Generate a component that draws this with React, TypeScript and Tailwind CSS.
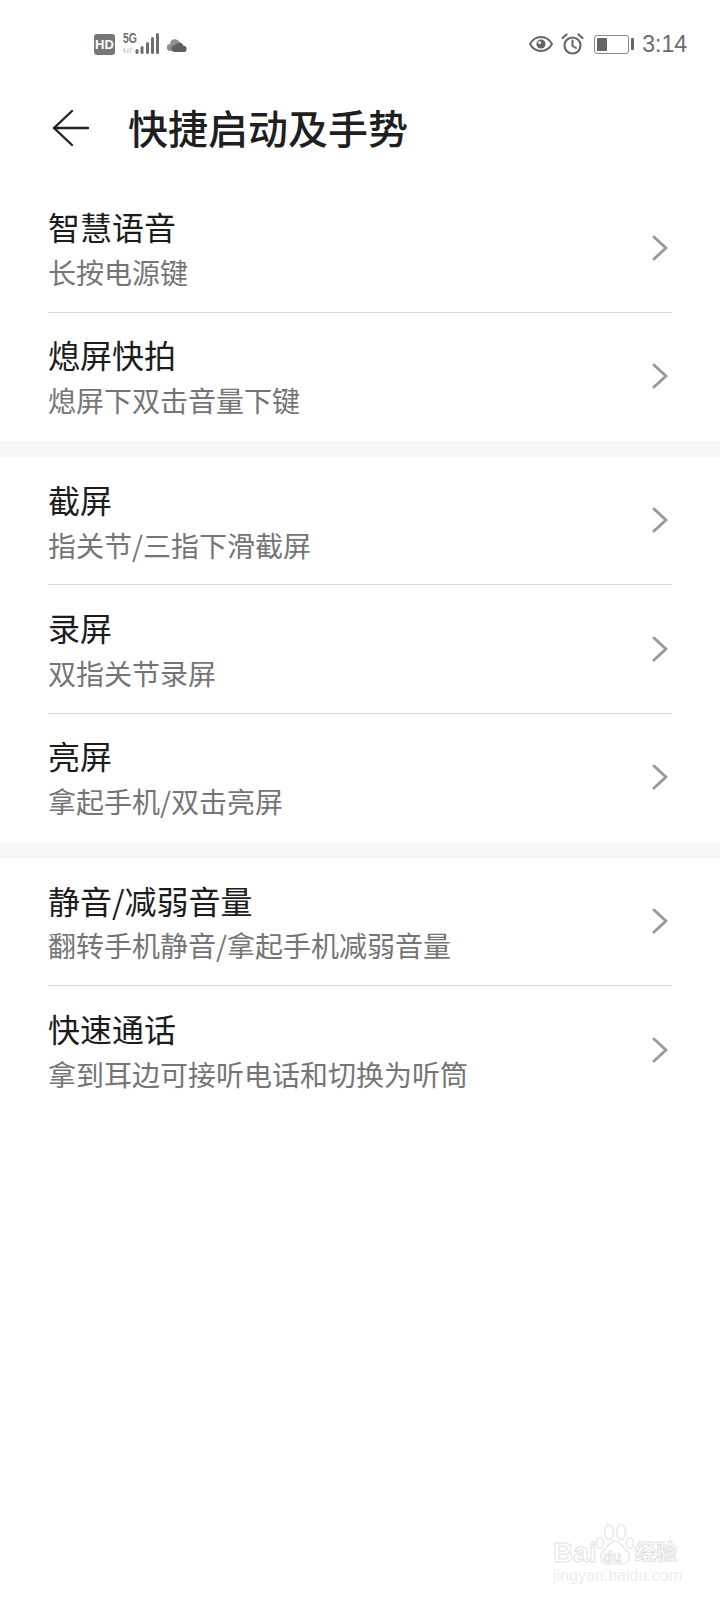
import React from "react";

type Row = { title: string; sub: string };

const groups: Row[][] = [
  [
    { title: "智慧语音", sub: "长按电源键" },
    { title: "熄屏快拍", sub: "熄屏下双击音量下键" },
  ],
  [
    { title: "截屏", sub: "指关节/三指下滑截屏" },
    { title: "录屏", sub: "双指关节录屏" },
    { title: "亮屏", sub: "拿起手机/双击亮屏" },
  ],
  [
    { title: "静音/减弱音量", sub: "翻转手机静音/拿起手机减弱音量" },
    { title: "快速通话", sub: "拿到耳边可接听电话和切换为听筒" },
  ],
];

const cjk = { fontFamily: '"Noto Sans CJK SC", sans-serif' };
const latin = { fontFamily: '"Liberation Sans", "Noto Sans CJK SC", sans-serif' };

const Chevron = () => (
  <svg width="16" height="28" viewBox="0 0 16 28" fill="none" className="shrink-0">
    <path d="M2 3 L14 14 L2 25" stroke="#9a9a9a" strokeWidth="3" strokeLinecap="round" strokeLinejoin="round" />
  </svg>
);

const StatusLeft = () => (
  <div className="flex items-center" style={latin}>
    <div className="w-[21px] h-[21px] rounded-[3px] bg-[#777777] flex items-center justify-center text-white text-[13px] font-bold leading-none">
      HD
    </div>
    <div className="relative ml-[8px] w-[37px] h-[21px] mt-[-2px]">
      <span className="absolute left-0 top-0 text-[14px] font-bold leading-[10px] text-[#707070] scale-x-[0.75] origin-left">5G</span>
      <svg width="37" height="21" viewBox="0 0 37 21" className="absolute left-0 top-0">
        <path d="M1.500 15.500V20M1.500 15.500 0 17" stroke="#c8c8c8" strokeWidth="1.400" fill="none" />
        <path d="M5 14.500V20M5 20l-1.500-2M7.500 14.500V20M7.500 14.500 9 16.500" stroke="#d2d2d2" strokeWidth="1.200" fill="none" />
        <rect x="12.500" y="16" width="3" height="5" rx="1.500" fill="#6e6e6e" />
        <rect x="17.500" y="13" width="3" height="8" rx="1.500" fill="#6e6e6e" />
        <rect x="23" y="9" width="3" height="12" rx="1.500" fill="#6e6e6e" />
        <rect x="28" y="4" width="3" height="17" rx="1.500" fill="#6e6e6e" />
        <rect x="33" y="0" width="3" height="21" rx="1.500" fill="#6e6e6e" />
      </svg>
    </div>
    <svg width="20" height="15" viewBox="0 0 20 15" className="ml-[7px]">
      <path d="M3.500 14a3.500 3.500 0 0 1-.5-7 5 5 0 0 1 9.500-2A5 5 0 0 1 14 14z" fill="#8f8f8f" />
      <path d="M8 15a3.400 3.400 0 0 1 0-6.800 4.600 4.600 0 0 1 8.500 .6A3.100 3.100 0 0 1 16.500 15z" fill="#5f5f5f" />
    </svg>
  </div>
);

const StatusRight = () => (
  <div className="flex items-center" style={latin}>
    <svg width="24" height="16" viewBox="0 0 24 16" fill="none">
      <path d="M1 8C3.500 3.500 7.500 1 12 1s8.500 2.500 11 7c-2.500 4.500-6.500 7-11 7S3.500 12.500 1 8z" stroke="#666666" strokeWidth="2" />
      <circle cx="12" cy="8" r="4.600" fill="#666666" />
      <circle cx="10.500" cy="6.500" r="1.500" fill="#ffffff" />
    </svg>
    <svg width="23" height="22" viewBox="0 0 23 22" fill="none" className="ml-[8px]">
      <circle cx="11.500" cy="12.500" r="8" stroke="#666666" strokeWidth="2.200" />
      <path d="M11.500 7.500V13l3.500 2" stroke="#666666" strokeWidth="2" strokeLinecap="round" />
      <path d="M1.500 5 5.500 1.500M21.500 5 17.500 1.500" stroke="#666666" strokeWidth="2.200" strokeLinecap="round" />
    </svg>
    <div className="ml-[10px] w-[35px] h-[19px] rounded-[3px] border border-[#888888] p-[2px] flex">
      <div className="w-[10px] bg-[#666666] rounded-[1px]" />
    </div>
    <div className="ml-[2px] w-[3px] h-[12px] bg-[#666666] rounded-[1px]" />
    <span className="ml-[8px] text-[23px] leading-none text-[#6b6b6b]">3:14</span>
  </div>
);

const Watermark = () => (
  <div className="absolute left-[553px] top-[1523px] w-[130px] h-[62px] pointer-events-none" style={latin}>
    <svg width="38" height="43" viewBox="0 0 38 43" fill="none" stroke="#e8e8e8" strokeWidth="1.500" className="absolute left-[43px] top-0">
      <ellipse cx="13" cy="9" rx="4.500" ry="7.500" />
      <ellipse cx="25" cy="9" rx="4.500" ry="7.500" />
      <ellipse cx="34" cy="20" rx="3.500" ry="5.500" />
      <ellipse cx="4" cy="20" rx="3.500" ry="5.500" />
      <path d="M19 18c5 0 7 5 11 9 6 6 3 15-5 14-4-.5-8-.5-12 0-8 1-11-8-5-14 4-4 6-9 11-9z" />
    </svg>
    <span className="absolute left-0 top-[16px] text-[28px] leading-none font-bold text-transparent [-webkit-text-stroke:1px_#e2e2e2]">Bai</span>
    <span className="absolute left-[50px] top-[26px] text-[15px] leading-none font-bold text-transparent [-webkit-text-stroke:1px_#e2e2e2]">du</span>
    <span className="absolute left-[82px] top-[17px] text-[21px] leading-none font-bold text-transparent [-webkit-text-stroke:1px_#e2e2e2]" style={cjk}>经验</span>
    <span className="absolute left-0 top-[45px] text-[16px] leading-none text-[#eeeeee]">jingyan.baidu.com</span>
  </div>
);

const App = () => {
  return (
    <div className="relative w-[720px] h-[1600px] bg-white overflow-hidden" style={cjk}>
      <div className="flex items-center justify-between h-[48px] pt-[20px] box-content pl-[94px] pr-[33px]">
        <StatusLeft />
        <StatusRight />
      </div>

      <div className="flex items-center h-[80px] pl-[52px] mt-[19px]">
        <svg width="38" height="38" viewBox="0 0 38 38" fill="none" className="mt-[1px]">
          <path d="M20 2 L2 19 L20 36 M2 19 H36" stroke="#222222" strokeWidth="2.400" strokeLinecap="round" strokeLinejoin="round" />
        </svg>
        <h1 className="ml-[38px] text-[40px] leading-none font-medium text-[#1f1f1f]">快捷启动及手势</h1>
      </div>

      <div className="mt-[17.500px]">
        {groups.map((rows, i) => (
          <div key={i} className={i > 0 ? "border-t-[16px] border-[#f7f7f7]" : ""}>
            {rows.map((row, j) => (
              <div key={row.title} className="mx-[48px] h-[128.300px] flex items-center justify-between relative">
                <div className="flex flex-col self-start pt-[21.700px]">
                  <span className="text-[32px] leading-[40px] text-[#1c1c1c]">{row.title}</span>
                  <span className="mt-[7.800px] text-[28px] leading-[36px] text-[#757575]">{row.sub}</span>
                </div>
                <div className="mr-[4px] mb-[1.500px]">
                  <Chevron />
                </div>
                {j < rows.length - 1 && <div className="absolute left-0 right-0 bottom-0 h-[1px] bg-[#d9d9d9]" />}
              </div>
            ))}
          </div>
        ))}
      </div>

      <Watermark />
    </div>
  );
};

export default App;
